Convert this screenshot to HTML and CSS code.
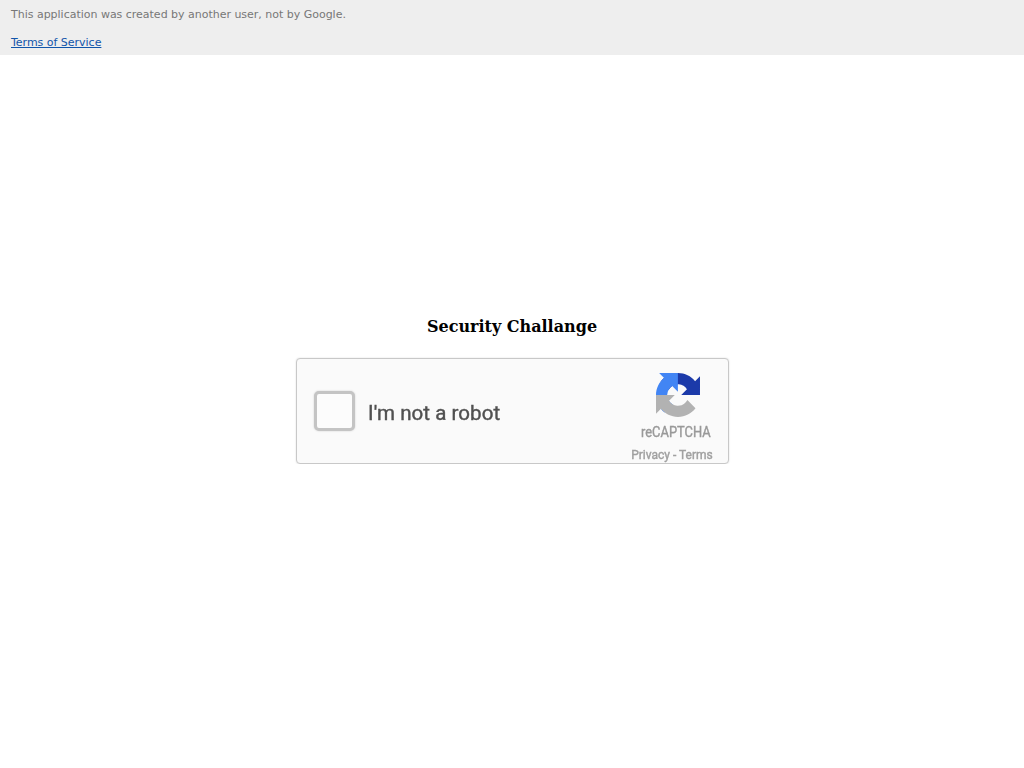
FILE: index.html
```html
<!DOCTYPE html>
<html lang="en">
<head>
<meta charset="utf-8">
<title>Security Challange</title>
<link rel="stylesheet" href="styles.css">
</head>
<body>
<header class="banner">
  <p class="notice">This application was created by another user, not by Google.</p>
  <a class="tos" href="#">Terms of Service</a>
</header>
<main class="content">
  <h1 class="title">Security Challange</h1>
  <section class="captcha">
    <span class="box"></span>
    <span class="label">I'm not a robot</span>
    <div class="brand">
      <svg class="logo" viewBox="0 0 64 64" aria-hidden="true">
        <path fill="#1c3aa9" d="M64 31.955l-.033-1.37V4.687l-7.16 7.16C50.948 4.674 42.033.093 32.05.093c-10.4 0-19.622 4.96-25.458 12.64l11.736 11.86a15.55 15.55 0 0 1 4.754-5.334c2.05-1.6 4.952-2.906 8.968-2.906.485 0 .86.057 1.135.163 4.976.393 9.288 3.14 11.828 7.124l-8.307 8.307L64 31.953"/>
        <path fill="#4285f4" d="M31.862.094l-1.37.033H4.594l7.16 7.16C4.58 13.147 0 22.06 0 32.046c0 10.4 4.96 19.622 12.64 25.458L24.5 45.768a15.55 15.55 0 0 1-5.334-4.754c-1.6-2.05-2.906-4.952-2.906-8.968 0-.485.057-.86.163-1.135.393-4.976 3.14-9.288 7.124-11.828l8.307 8.307L31.86.095"/>
        <path fill="#b2b2b2" d="M.001 32.045l.033 1.37v25.898l7.16-7.16c5.86 7.173 14.774 11.754 24.76 11.754 10.4 0 19.622-4.96 25.458-12.64l-11.736-11.86a15.55 15.55 0 0 1-4.754 5.334c-2.05 1.6-4.952 2.906-8.968 2.906-.485 0-.86-.057-1.135-.163-4.976-.393-9.288-3.14-11.828-7.124l8.307-8.307c-10.522.04-22.4.066-27.295-.005"/>
      </svg>
      <span class="name">reCAPTCHA</span>
      <span class="links">Privacy - Terms</span>
    </div>
  </section>
</main>
</body>
</html>
```
FILE: styles.css
```css
* { box-sizing: border-box; }
body { margin: 0; background: #fff; }
.banner {
  height: 55px;
  padding: 7px 11px 0;
  background: #eee;
  font: 11px/15px "DejaVu Sans", sans-serif;
  letter-spacing: -0.015px;
}
.notice { margin: 0 0 13px; color: #777; }
.tos { display: block; width: max-content; color: #1155aa; }
.content {
  display: flex;
  flex-direction: column;
  align-items: center;
  padding-top: 262px;
}
.title {
  margin: 0 0 22px;
  font: bold 16px/19px "DejaVu Serif", serif;
  color: #000;
}
.captcha {
  display: flex;
  width: 433px;
  height: 106px;
  margin-left: 1px;
  padding-left: 17px;
  border: 1px solid #c8c8c8;
  border-radius: 4px;
  background: #fafafa;
  box-shadow: 0 0 2px #ddd;
  font-family: Roboto, sans-serif;
  filter: blur(0.4px);
}
.box {
  width: 41px;
  height: 40px;
  margin-top: 32px;
  border: 3px solid #c4c4c4;
  border-radius: 5px;
  background: #fcfcfc;
  box-shadow: 0 0 2px #ccc;
}
.label {
  margin: 42px 0 0 13px;
  font-size: 20.5px;
  line-height: 24px;
  letter-spacing: 0.05px;
  color: #505050;
  -webkit-text-stroke: 0.4px #505050;
  white-space: nowrap;
}
.brand {
  display: flex;
  flex-direction: column;
  align-items: center;
  width: 90px;
  margin: 14px 11px 0 auto;
  white-space: nowrap;
}
.logo { width: 44px; height: 44px; margin-left: 12px; }
.name {
  margin: 7px 0 0 7px;
  font-size: 14px;
  line-height: 16px;
  color: #999;
  -webkit-text-stroke: 0.4px #999;
  transform: scaleX(0.92);
}
.links {
  margin-top: 8px;
  font-size: 12px;
  line-height: 14px;
  color: #a0a0a0;
  -webkit-text-stroke: 0.4px #a0a0a0;
}
```
